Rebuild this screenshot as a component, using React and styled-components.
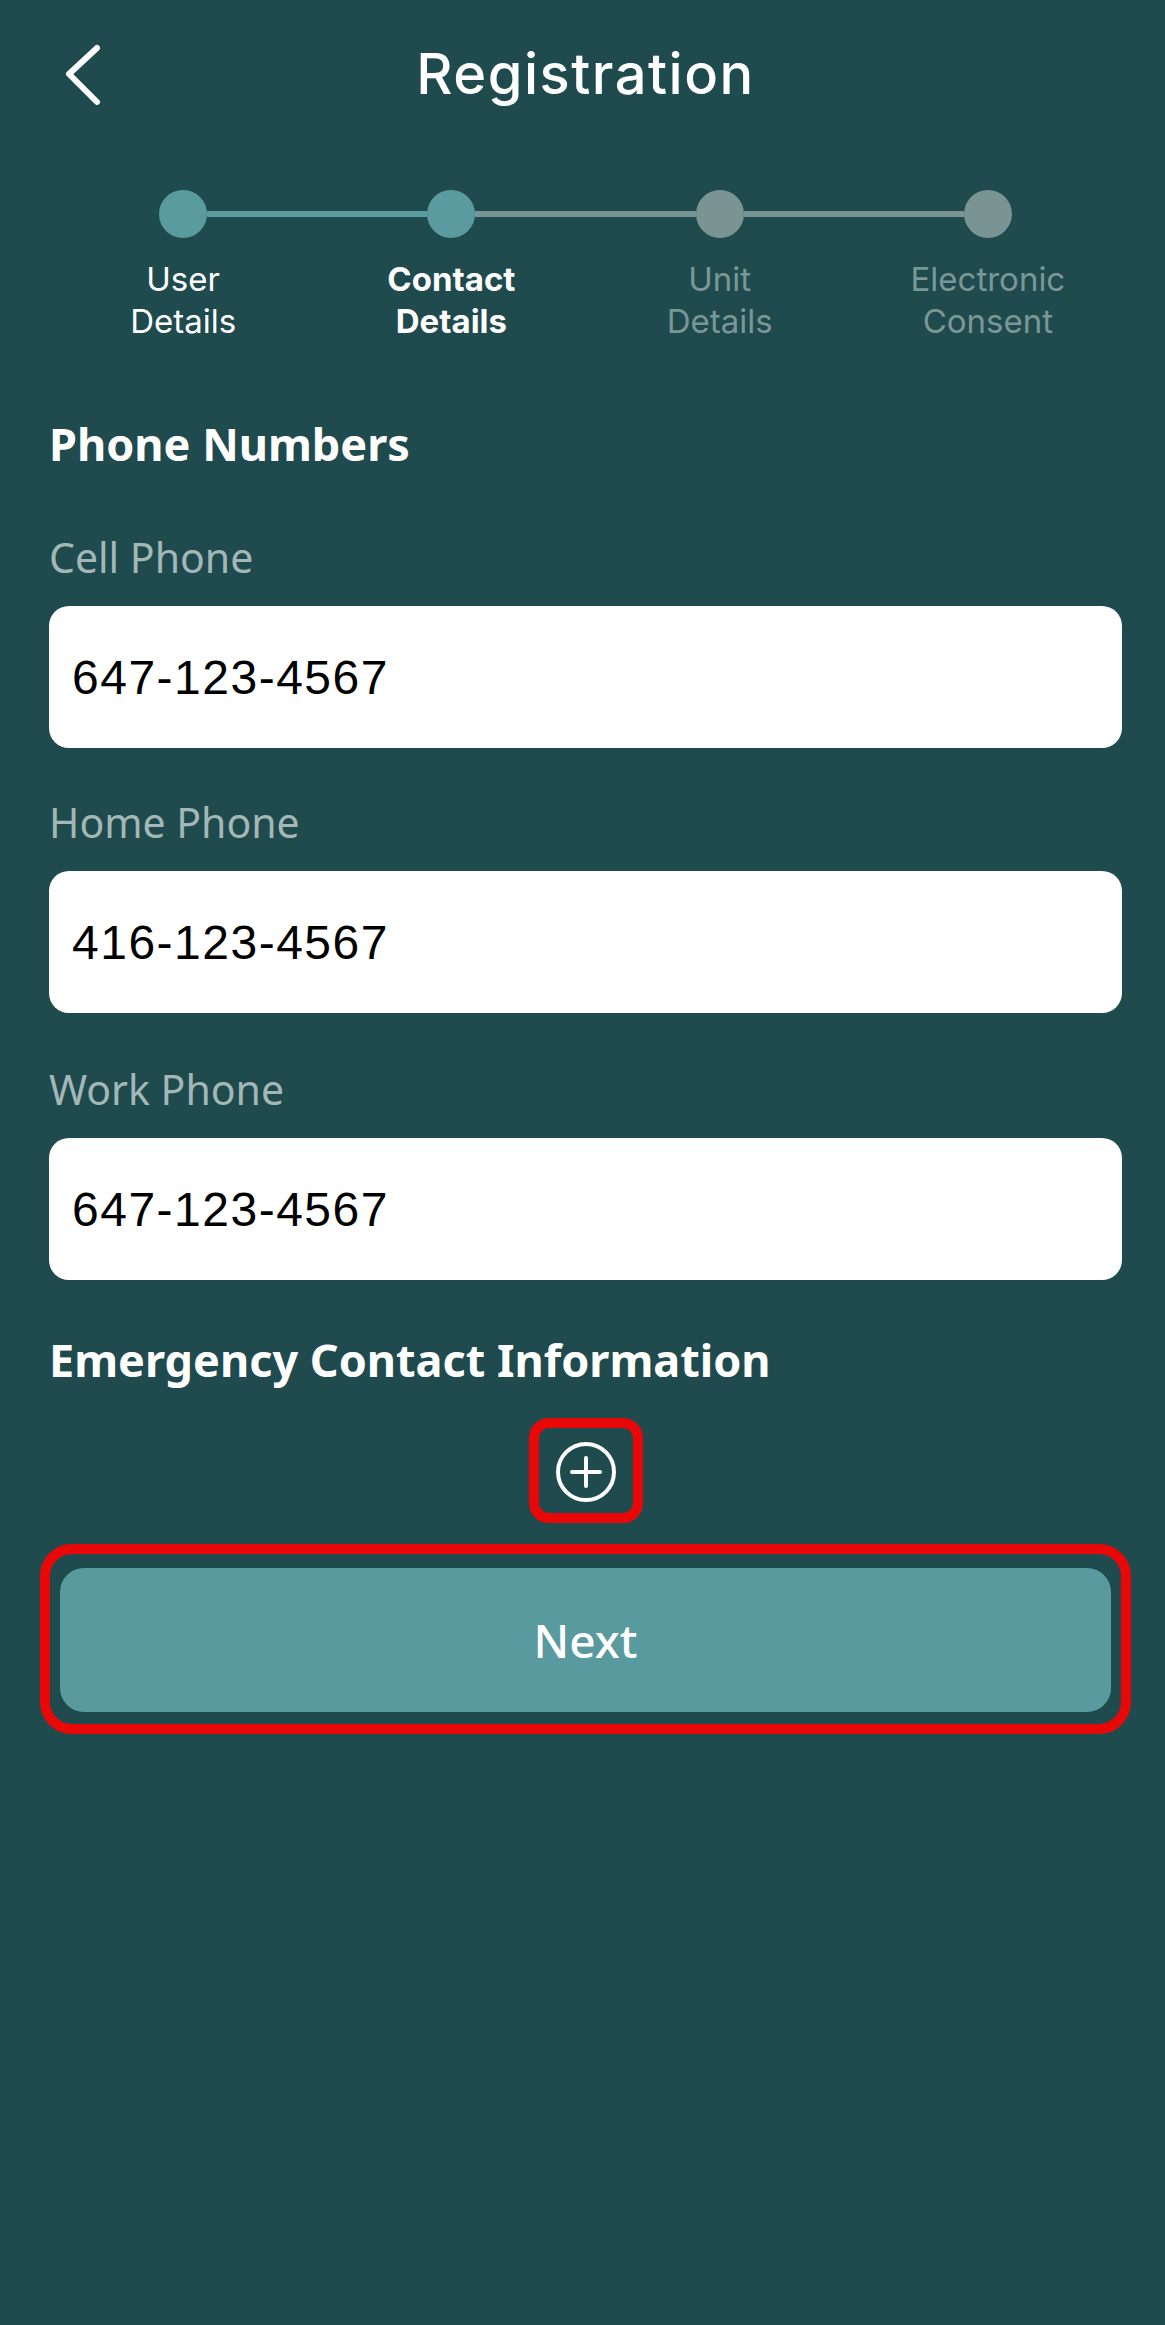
import React from "react";
import styled, { createGlobalStyle } from "styled-components";

const GlobalStyle = createGlobalStyle`
  body {
    margin: 0;
    background: #1f4a4e;
    font-family: "Noto Sans", "Open Sans", sans-serif;
  }
`;

const Screen = styled.div`
  min-height: 2325px;
  background: #1f4a4e;
  color: #ffffff;
  padding: 0 43px 0 49px;
  box-sizing: border-box;
`;

const Header = styled.header`
  height: 148px;
  display: flex;
  align-items: center;
  justify-content: center;
  position: relative;
`;

const BackButton = styled.button`
  position: absolute;
  left: 14px;
  top: 44px;
  width: 48px;
  height: 64px;
  padding: 0;
  border: none;
  background: transparent;
  cursor: pointer;
`;

const Title = styled.h1`
  margin: 0;
  font-family: "Inter", sans-serif;
  font-weight: 500;
  font-size: 56px;
  letter-spacing: 1.5px;
  color: #ffffff;
`;

const Track = styled.div`
  margin-top: 42px;
  padding: 0 110px;
  display: flex;
  align-items: center;
`;

const Dot = styled.span`
  flex: none;
  width: 48px;
  height: 48px;
  border-radius: 50%;
  background: ${(p) => (p.$done ? "#5a9b9f" : "#7a9494")};
`;

const Connector = styled.span`
  flex: 1;
  height: 6px;
  background: ${(p) => (p.$done ? "#5a9b9f" : "#7a9494")};
`;

const StepLabels = styled.div`
  margin-top: 20px;
  display: grid;
  grid-template-columns: repeat(4, 1fr);
`;

const StepLabel = styled.div`
  text-align: center;
  font-family: "Inter", sans-serif;
  font-size: 33px;
  line-height: 42px;
  font-weight: ${(p) => (p.$current ? 700 : 400)};
  color: ${(p) => (p.$done ? "#ffffff" : "#7a9797")};
`;

const SectionTitle = styled.h2`
  margin: ${(p) => p.$top}px 0 0;
  font-size: 45px;
  line-height: 56px;
  font-weight: 700;
  color: #ffffff;
`;

const Field = styled.div`
  margin-top: ${(p) => p.$top}px;
`;

const FieldLabel = styled.label`
  display: block;
  font-size: 41px;
  line-height: 48px;
  color: #a3b7b7;
`;

const Input = styled.input`
  display: block;
  width: 100%;
  height: 142px;
  margin-top: 25px;
  box-sizing: border-box;
  border: none;
  border-radius: 20px;
  background: #ffffff;
  padding: 0 23px;
  font-family: "Liberation Sans", Arial, sans-serif;
  font-size: 48px;
  letter-spacing: 1.5px;
  color: #000000;
  outline: none;
`;

const AddRow = styled.div`
  margin-top: 30px;
  display: flex;
  justify-content: center;
`;

const Highlight = styled.div`
  border: 10px solid #e80808;
  border-radius: ${(p) => p.$radius}px;
  padding: ${(p) => p.$pad};
  margin: ${(p) => p.$margin};
`;

const AddButton = styled.button`
  display: block;
  width: 60px;
  height: 60px;
  padding: 0;
  border: none;
  background: transparent;
  cursor: pointer;
`;

const NextButton = styled.button`
  display: block;
  width: 100%;
  height: 144px;
  border: none;
  border-radius: 24px;
  background: #589a9e;
  color: #ffffff;
  font-family: "Noto Sans", sans-serif;
  font-size: 46px;
  font-weight: 500;
  cursor: pointer;
`;

const steps = [
  { label: ["User", "Details"], done: true },
  { label: ["Contact", "Details"], done: true, current: true },
  { label: ["Unit", "Details"], done: false },
  { label: ["Electronic", "Consent"], done: false },
];

const phones = [
  { label: "Cell Phone", value: "647-123-4567", top: 61 },
  { label: "Home Phone", value: "416-123-4567", top: 50 },
  { label: "Work Phone", value: "647-123-4567", top: 52 },
];

export default function App() {
  return (
    <Screen>
      <GlobalStyle />
      <Header>
        <BackButton aria-label="Back">
          <svg width="48" height="64" viewBox="0 0 48 64" fill="none">
            <path
              d="M34 4 L6 30 L34 58"
              stroke="#ffffff"
              strokeWidth="6"
              strokeLinecap="round"
              strokeLinejoin="round"
            />
          </svg>
        </BackButton>
        <Title>Registration</Title>
      </Header>

      <Track>
        {steps.map((s, i) => (
          <React.Fragment key={i}>
            {i > 0 && <Connector $done={s.done} />}
            <Dot $done={s.done} />
          </React.Fragment>
        ))}
      </Track>
      <StepLabels>
        {steps.map((s, i) => (
          <StepLabel key={i} $done={s.done} $current={s.current}>
            {s.label[0]}
            <br />
            {s.label[1]}
          </StepLabel>
        ))}
      </StepLabels>

      <SectionTitle $top={74}>Phone Numbers</SectionTitle>
      {phones.map((p) => (
        <Field key={p.label} $top={p.top}>
          <FieldLabel>{p.label}</FieldLabel>
          <Input type="tel" defaultValue={p.value} />
        </Field>
      ))}

      <SectionTitle $top={52}>Emergency Contact Information</SectionTitle>
      <AddRow>
        <Highlight $radius={20} $pad="14px 17px 11px">
          <AddButton aria-label="Add emergency contact">
            <svg width="60" height="60" viewBox="0 0 60 60" fill="none">
              <circle cx="30" cy="30" r="28" stroke="#ffffff" strokeWidth="4" />
              <path
                d="M30 16 V44 M16 30 H44"
                stroke="#ffffff"
                strokeWidth="4"
                strokeLinecap="round"
              />
            </svg>
          </AddButton>
        </Highlight>
      </AddRow>

      <Highlight $radius={32} $pad="14px 10px 12px" $margin="21px -9px 0">
        <NextButton>Next</NextButton>
      </Highlight>
    </Screen>
  );
}
